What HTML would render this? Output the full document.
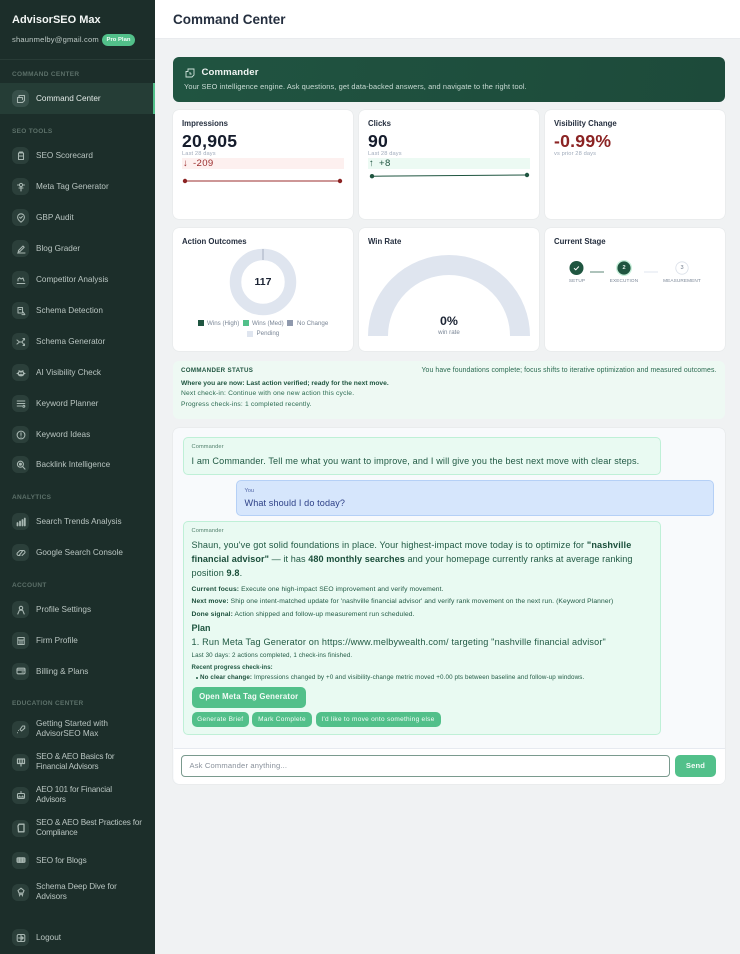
<!DOCTYPE html>
<html><head><meta charset="utf-8"><style>
*{box-sizing:border-box;margin:0;padding:0}
html,body{width:740px;height:954px;overflow:hidden;background:#f0f2f3;font-family:"Liberation Sans",Arial,sans-serif}
#r{position:relative;width:740px;height:954px;overflow:hidden;filter:blur(.3px)}
.a,.t,.l,.i,.n{position:absolute}
.t{white-space:nowrap}
#s{position:absolute;left:0;top:0;width:155px;height:954px;background:#1c2e2a}
.l{left:12px;font-size:6.5px;letter-spacing:.3px;color:#5c7069;font-weight:700;white-space:nowrap;line-height:8px}
.i{left:12px;width:17px;height:17px;border-radius:6px;background:#2b3f3a}
.i svg{position:absolute;left:3.5px;top:3.5px;width:10px;height:10px;fill:none;stroke:#a9b8b3;stroke-width:1.05;stroke-linecap:round;stroke-linejoin:round}
.n{left:36px;font-size:8.2px;line-height:10px;color:#b9c5c1;white-space:nowrap}
.c{position:absolute;background:#fff;border-radius:6px;box-shadow:0 0 1px rgba(30,50,60,.18)}
.h{position:absolute;font-size:7.8px;font-weight:700;color:#252f3f;white-space:nowrap;line-height:10px;margin-top:-.5px}
.big{position:absolute;font-size:17.6px;font-weight:700;line-height:20px;white-space:nowrap;letter-spacing:.25px;color:#151c2c}
.sm{position:absolute;font-size:5.7px;color:#a0abbb;white-space:nowrap;line-height:7px;letter-spacing:.12px}
.g{color:#1f5540}
.chat{color:#215a44;white-space:nowrap;position:absolute}
.chat b{color:#1b4f3b}
b{font-weight:700}
.btn{position:absolute;background:#52c08a;color:#f4fbf7;border-radius:5px;text-align:center;font-weight:700;white-space:nowrap}
.leg{position:absolute;font-size:6.2px;color:#7a8696;white-space:nowrap;line-height:8px}
.sq{position:absolute;width:6px;height:6px}
</style></head><body><div id="r">

<div class="a" style="left:155px;top:0;width:585px;height:39px;background:#fff;border-bottom:1px solid #e9ebee"></div>
<div class="t" style="left:173px;top:11px;font-size:13.5px;line-height:17px;font-weight:700;color:#252f3f">Command Center</div>

<div id="s">
<div class="t" style="left:12px;top:14px;font-size:11px;line-height:13px;font-weight:700;color:#f3f6f5">AdvisorSEO Max</div>
<div class="t" style="left:12px;top:34.5px;font-size:7.6px;line-height:10px;color:#bcc8c4;letter-spacing:.18px">shaunmelby@gmail.com</div>
<div class="a" style="left:102px;top:34px;width:33px;height:11.5px;border-radius:6px;background:#52c08a"></div>
<div class="t" style="left:102px;top:36.5px;width:33px;text-align:center;color:#f2fbf6;font-size:5.9px;font-weight:700;line-height:7px">Pro Plan</div>
<div class="a" style="left:0;top:59px;width:155px;height:1px;background:#283b36"></div>

<div class="l" style="top:71px">COMMAND CENTER</div>
<div class="a" style="left:0;top:83px;width:155px;height:31px;background:#253d36"></div>
<div class="a" style="left:153px;top:83px;width:2px;height:31px;background:#52c08a"></div>
<div class="i" style="top:90px;background:#38504a"><svg viewBox="0 0 10 10"><path d="M3 1.5h5.5v5L6.5 8.5H1.5v-5L3 3.5zM3 1.5v2h3.5M6.5 3.5v2"/></svg></div>
<div class="n" style="top:94px;color:#e3eae7">Command Center</div>

<div class="l" style="top:128px">SEO TOOLS</div>
<div class="i" style="top:147px"><svg viewBox="0 0 10 10"><path d="M2.5 2h5v6.5h-5zM3.5 2V1h3v1M3.5 5h3"/></svg></div><div class="n" style="top:151px">SEO Scorecard</div>
<div class="i" style="top:178px"><svg viewBox="0 0 10 10"><circle cx="5" cy="3" r="1.6"/><path d="M5 4.6V9M3 6h4M1.5 3h1.5M7 3h1.5"/></svg></div><div class="n" style="top:182px">Meta Tag Generator</div>
<div class="i" style="top:209px"><svg viewBox="0 0 10 10"><path d="M5 9.2C3 7.6 1.6 6 1.6 4.2a3.4 3.4 0 0 1 6.8 0C8.4 6 7 7.6 5 9.2z"/><path d="M3.6 4.2L4.7 5.3 6.4 3.4"/></svg></div><div class="n" style="top:213px">GBP Audit</div>
<div class="i" style="top:240px"><svg viewBox="0 0 10 10"><path d="M2.5 6.5L7 2l1.2 1.2L3.8 7.6 2.3 8zM1.5 9h7.5"/></svg></div><div class="n" style="top:244px">Blog Grader</div>
<div class="i" style="top:271px"><svg viewBox="0 0 10 10"><path d="M1.2 8.5h7.6M2 6V4l1.6-1.2L5 4l2-1 1 3"/></svg></div><div class="n" style="top:275px">Competitor Analysis</div>
<div class="i" style="top:302px"><svg viewBox="0 0 10 10"><path d="M2 1.5h4.5v5.5H2zM3.5 3.5h1.5M7 6l1.8 2.4M6 8.6h2.8"/></svg></div><div class="n" style="top:306px">Schema Detection</div>
<div class="i" style="top:333px"><svg viewBox="0 0 10 10"><path d="M1 3l2.5 2L1 7M3.5 5h2.5M6 5l2.5-3.5M6 5l2.5 3.5M7 1.5h1.5V3M7 8.5h1.5V7"/></svg></div><div class="n" style="top:337px">Schema Generator</div>
<div class="i" style="top:364px"><svg viewBox="0 0 10 10"><ellipse cx="5" cy="5.5" rx="3" ry="2.4" fill="#a9b8b3"/><path d="M1 5.5h1M8 5.5h1M3 2.6l1 1M7 2.6l-1 1"/><circle cx="3.9" cy="5.3" r=".5" stroke="#2b3f3a"/><circle cx="6.1" cy="5.3" r=".5" stroke="#2b3f3a"/></svg></div><div class="n" style="top:368px">AI Visibility Check</div>
<div class="i" style="top:395px"><svg viewBox="0 0 10 10"><path d="M1.2 2h7.6M1.2 4.5h7.6M1.2 7h4.5"/><circle cx="7.8" cy="7.3" r="1"/></svg></div><div class="n" style="top:399px">Keyword Planner</div>
<div class="i" style="top:426px"><svg viewBox="0 0 10 10"><circle cx="5" cy="5" r="3.9"/><path d="M5 2.8v2.6M5 7v.2"/></svg></div><div class="n" style="top:430px">Keyword Ideas</div>
<div class="i" style="top:456px"><svg viewBox="0 0 10 10"><circle cx="4.4" cy="4.2" r="3"/><circle cx="4.4" cy="4.2" r="1" fill="#a9b8b3"/><path d="M6.6 6.5l2.4 2.6"/></svg></div><div class="n" style="top:460px">Backlink Intelligence</div>

<div class="l" style="top:493.5px">ANALYTICS</div>
<div class="i" style="top:513px"><svg viewBox="0 0 10 10"><path d="M1.5 8.5V6M4 8.5V4.5M6.5 8.5V3M8.8 8.5V1.5" stroke-width="1.8"/></svg></div><div class="n" style="top:517px">Search Trends Analysis</div>
<div class="i" style="top:544px"><svg viewBox="0 0 10 10"><path d="M4 7.5H2.4A1.6 1.6 0 0 1 1.3 5L4 2.5h3.6A1.6 1.6 0 0 1 8.7 5L6 7.5"/><path d="M3.5 7l3-4"/></svg></div><div class="n" style="top:548px">Google Search Console</div>

<div class="l" style="top:581.5px">ACCOUNT</div>
<div class="i" style="top:601px"><svg viewBox="0 0 10 10"><circle cx="5" cy="3" r="1.7"/><path d="M1.8 9L3.4 5.2h3.2L8.2 9"/></svg></div><div class="n" style="top:605px">Profile Settings</div>
<div class="i" style="top:632px"><svg viewBox="0 0 10 10"><path d="M1.8 1.5h6.4v7H1.8zM1.8 4h6.4M4 4v4.5M6 4v4.5"/></svg></div><div class="n" style="top:636px">Firm Profile</div>
<div class="i" style="top:662.5px"><svg viewBox="0 0 10 10"><rect x="1" y="2.2" width="8" height="5.6" rx="1"/><path d="M1 4h8" stroke-width="1.3"/><path d="M6 6h1.5"/></svg></div><div class="n" style="top:666.5px">Billing &amp; Plans</div>

<div class="l" style="top:699.5px">EDUCATION CENTER</div>
<div class="i" style="top:720.5px"><svg viewBox="0 0 10 10"><path d="M4 5.5L6.5 2h2.2v2.2L5.5 7zM1.5 8.8v-.1M2.5 6.5v-.1"/></svg></div><div class="n" style="top:719px">Getting Started with<br>AdvisorSEO Max</div>
<div class="i" style="top:753.5px"><svg viewBox="0 0 10 10"><path d="M1.5 2h7v4.5h-7zM3.8 2v4.5M6.2 2v4.5M5 6.5V9" stroke-width="1.2"/></svg></div><div class="n" style="top:752px;letter-spacing:-.2px">SEO &amp; AEO Basics for<br>Financial Advisors</div>
<div class="i" style="top:786.5px"><svg viewBox="0 0 10 10"><rect x="1.5" y="3.5" width="7" height="5" rx="1"/><path d="M5 1.5v2M3.5 6h.1M6.5 6h.1M1.5 7h7"/></svg></div><div class="n" style="top:785px;letter-spacing:-.2px">AEO 101 for Financial<br>Advisors</div>
<div class="i" style="top:819.5px"><svg viewBox="0 0 10 10" style="stroke-width:1.3"><path d="M3 1.2h5v7.6H2.5L2 3z"/></svg></div><div class="n" style="top:818px;letter-spacing:-.17px">SEO &amp; AEO Best Practices for<br>Compliance</div>
<div class="i" style="top:851.5px"><svg viewBox="0 0 10 10"><rect x="1" y="2.8" width="8" height="4.6" rx="1" fill="#8a9a95"/><path d="M3.6 2.8v4.6M6.4 2.8v4.6"/></svg></div><div class="n" style="top:855.5px;letter-spacing:-.1px">SEO for Blogs</div>
<div class="i" style="top:883.5px"><svg viewBox="0 0 10 10"><path d="M5 1.2L8 3.5 7 6H3L2 3.5zM3.2 7.2h3.6M3.5 9l.5-1.8M6.5 9L6 7.2"/></svg></div><div class="n" style="top:882px;letter-spacing:-.08px">Schema Deep Dive for<br>Advisors</div>
<div class="i" style="top:929px"><svg viewBox="0 0 10 10"><rect x="1.2" y="1.5" width="7.6" height="7" rx="1.4"/><path d="M5 1.5v7M2.6 5h4.8M6 3.8L7.4 5 6 6.2"/></svg></div><div class="n" style="top:933px">Logout</div>
</div>

<!-- banner -->
<div class="a" style="left:173px;top:57px;width:552px;height:44.5px;border-radius:6px;background:linear-gradient(100deg,#205441,#1d4a3a)"></div>
<svg class="a" style="left:185px;top:68px;width:10px;height:10px;fill:none;stroke:#cfe2da;stroke-width:.9" viewBox="0 0 10 10"><path d="M3 1h6v6l-2 2H1V3.5h2zM3 1v2.5M5 4v2h1.6"/></svg>
<div class="t" style="left:201.5px;top:67px;font-size:9.6px;line-height:12px;font-weight:700;color:#f0f5f3;letter-spacing:.12px">Commander</div>
<div class="t" style="left:184px;top:82px;font-size:7.4px;line-height:9px;color:#c9dbd4;letter-spacing:.11px">Your SEO intelligence engine. Ask questions, get data-backed answers, and navigate to the right tool.</div>

<!-- metric cards -->
<div class="c" style="left:173px;top:110px;width:180px;height:109px"></div>
<div class="c" style="left:359px;top:110px;width:180px;height:109px"></div>
<div class="c" style="left:545px;top:110px;width:180px;height:109px"></div>
<div class="h" style="left:182px;top:119px">Impressions</div>
<div class="big" style="left:182px;top:131px">20,905</div>
<div class="sm" style="left:182px;top:150.5px">Last 28 days</div>
<div class="a" style="left:182px;top:158px;width:162px;height:11px;background:#fdf0ef"></div>
<div class="t" style="left:183px;top:158px;font-size:9.6px;line-height:11px;color:#9b2c2c;letter-spacing:.3px;word-spacing:2px">↓ -209</div>
<svg class="a" style="left:180px;top:177px;width:166px;height:8px" viewBox="0 0 166 8"><path d="M5 4H161" stroke="#9b2c2c" stroke-width="1"/><circle cx="5" cy="4" r="2.2" fill="#8b2323"/><circle cx="160" cy="4" r="2.2" fill="#8b2323"/></svg>

<div class="h" style="left:368px;top:119px">Clicks</div>
<div class="big" style="left:368px;top:131px">90</div>
<div class="sm" style="left:368px;top:150.5px">Last 28 days</div>
<div class="a" style="left:368px;top:158px;width:162px;height:11px;background:#ecfaf3"></div>
<div class="t" style="left:369px;top:158px;font-size:9.6px;line-height:11px;color:#1f5540;letter-spacing:.3px;word-spacing:2px">↑ +8</div>
<svg class="a" style="left:366px;top:170px;width:166px;height:10px" viewBox="0 0 166 10"><path d="M6 6.2L161 5" stroke="#1f5540" stroke-width="1"/><circle cx="6" cy="6.2" r="2.2" fill="#1f5540"/><circle cx="161" cy="5" r="2.2" fill="#1f5540"/></svg>

<div class="h" style="left:554px;top:119px">Visibility Change</div>
<div class="big" style="left:554px;top:131px;color:#8b2323">-0.99%</div>
<div class="sm" style="left:554px;top:150.5px">vs prior 28 days</div>

<!-- row 2 -->
<div class="c" style="left:173px;top:228px;width:180px;height:123px"></div>
<div class="c" style="left:359px;top:228px;width:180px;height:123px"></div>
<div class="c" style="left:545px;top:228px;width:180px;height:123px"></div>
<div class="h" style="left:182px;top:237px">Action Outcomes</div>
<svg class="a" style="left:226px;top:245px;width:74px;height:74px" viewBox="0 0 74 74"><circle cx="37" cy="37" r="27.5" fill="none" stroke="#dfe5ef" stroke-width="11.5"/><path d="M37 4v11" stroke="#8f99ad" stroke-width=".7"/></svg>
<div class="t" style="left:233px;top:276px;width:60px;text-align:center;font-size:10.5px;line-height:13px;font-weight:700;color:#1b2333">117</div>
<div class="sq" style="left:198px;top:320px;background:#1f5540"></div><div class="leg" style="left:207px;top:319.5px">Wins (High)</div>
<div class="sq" style="left:242.5px;top:320px;background:#52c08a"></div><div class="leg" style="left:252px;top:319.5px">Wins (Med)</div>
<div class="sq" style="left:287px;top:320px;background:#8f99ad"></div><div class="leg" style="left:297px;top:319.5px">No Change</div>
<div class="sq" style="left:247px;top:331px;background:#dfe5ef"></div><div class="leg" style="left:256.5px;top:330px">Pending</div>

<div class="h" style="left:368px;top:237px">Win Rate</div>
<svg class="a" style="left:359px;top:245px;width:180px;height:95px" viewBox="0 0 180 95"><path d="M19 91A71 71 0 0 1 161 91" fill="none" stroke="#dfe5ef" stroke-width="20"/></svg>
<div class="t" style="left:409px;top:314px;width:80px;text-align:center;font-size:12.4px;line-height:15px;font-weight:700;color:#1b2333">0%</div>
<div class="t" style="left:409px;top:328.5px;width:80px;text-align:center;font-size:6.2px;line-height:8px;color:#7a8696">win rate</div>

<div class="h" style="left:554px;top:237px">Current Stage</div>
<svg class="a" style="left:560px;top:255px;width:140px;height:26px" viewBox="0 0 140 26" fill="none"><path d="M30 17H44" stroke="#5d8777" stroke-width="1"/><path d="M84 17H98" stroke="#dfe5ef" stroke-width="1"/><circle cx="16.5" cy="13" r="7" fill="#1f5540"/><path d="M14 13.2l1.8 1.6 3-3.3" stroke="#fff" stroke-width="1"/><circle cx="64" cy="13" r="8" fill="#c8f0db"/><circle cx="64" cy="13" r="6.6" fill="#1f5540"/><circle cx="122" cy="13" r="6.2" fill="#fff" stroke="#d9dfe8" stroke-width=".8"/></svg>
<div class="t" style="left:614px;top:264px;width:20px;text-align:center;font-size:5.6px;line-height:8px;font-weight:700;color:#e6f3ed">2</div>
<div class="t" style="left:672px;top:264px;width:20px;text-align:center;font-size:5.6px;line-height:8px;color:#6e7a8a">3</div>
<div class="t" style="left:557px;top:276.5px;width:40px;text-align:center;font-size:4.7px;line-height:7px;color:#7a8696;letter-spacing:.12px">SETUP</div>
<div class="t" style="left:604px;top:276.5px;width:40px;text-align:center;font-size:4.7px;line-height:7px;color:#7a8696;letter-spacing:.12px">EXECUTION</div>
<div class="t" style="left:661px;top:276.5px;width:42px;text-align:center;font-size:4.7px;line-height:7px;color:#7a8696;letter-spacing:.12px">MEASUREMENT</div>

<!-- status -->
<div class="a" style="left:173px;top:360.5px;width:552px;height:58px;border-radius:6px;background:#eef9f3"></div>
<div class="t" style="left:181px;top:366.5px;font-size:6.2px;line-height:8px;font-weight:700;color:#1f5540;letter-spacing:.32px">COMMANDER STATUS</div>
<div class="t g" style="left:421.5px;top:367px;font-size:6.9px;line-height:8px;letter-spacing:.095px;color:#2a6a50">You have foundations complete; focus shifts to iterative optimization and measured outcomes.</div>
<div class="t" style="left:181px;top:379.5px;font-size:6.7px;line-height:8px;font-weight:700;color:#1f5540">Where you are now: Last action verified; ready for the next move.</div>
<div class="t" style="left:181px;top:390px;font-size:6.7px;line-height:8px;color:#2a6a50;letter-spacing:.19px">Next check-in: Continue with one new action this cycle.</div>
<div class="t" style="left:181px;top:400.5px;font-size:6.7px;line-height:8px;color:#2a6a50;letter-spacing:.17px">Progress check-ins: 1 completed recently.</div>

<!-- chat -->
<div class="c" style="left:173px;top:428px;width:552px;height:356px;background:#f8fafc"></div>
<div class="a" style="left:173.5px;top:748px;width:551px;height:35.5px;background:#fff;border-top:1px solid #e6eaf0;border-radius:0 0 6px 6px"></div>

<div class="a" style="left:183px;top:436.5px;width:478px;height:38.5px;background:#e9faf2;border:1px solid #bff0d7;border-radius:5px"></div>
<div class="chat" style="left:191.5px;top:444px;font-size:5.7px;line-height:7px;color:#52806d;letter-spacing:.1px">Commander</div>
<div class="chat" style="left:191.5px;top:455px;font-size:9.1px;line-height:12px;letter-spacing:.14px">I am Commander. Tell me what you want to improve, and I will give you the best next move with clear steps.</div>

<div class="a" style="left:236px;top:480px;width:478px;height:35.5px;background:#d6e6fc;border:1px solid #b5d0f6;border-radius:5px"></div>
<div class="chat" style="left:244.5px;top:487.5px;font-size:5.7px;line-height:7px;color:#5468a8">You</div>
<div class="chat" style="left:244.5px;top:497px;font-size:9.1px;line-height:12px;letter-spacing:.11px;color:#2c3f86">What should I do today?</div>

<div class="a" style="left:183px;top:521px;width:478px;height:213.5px;background:#e9faf2;border:1px solid #bff0d7;border-radius:5px"></div>
<div class="chat" style="left:191.5px;top:528px;font-size:5.7px;line-height:7px;color:#52806d;letter-spacing:.1px">Commander</div>
<div class="chat" style="left:191.5px;top:539px;font-size:9.1px;line-height:12px;letter-spacing:.13px">Shaun, you've got solid foundations in place. Your highest-impact move today is to optimize for <b>"nashville</b></div>
<div class="chat" style="left:191.5px;top:553px;font-size:9.1px;line-height:12px;letter-spacing:.08px"><b>financial advisor"</b> — it has <b>480 monthly searches</b> and your homepage currently ranks at average ranking</div>
<div class="chat" style="left:191.5px;top:567px;font-size:9.1px;line-height:12px;letter-spacing:.13px">position <b>9.8</b>.</div>
<div class="chat" style="left:191.5px;top:585.5px;font-size:6.7px;line-height:8px;letter-spacing:.11px"><b>Current focus:</b> Execute one high-impact SEO improvement and verify movement.</div>
<div class="chat" style="left:191.5px;top:598px;font-size:6.7px;line-height:8px;letter-spacing:.11px"><b>Next move:</b> Ship one intent-matched update for 'nashville financial advisor' and verify rank movement on the next run. (Keyword Planner)</div>
<div class="chat" style="left:191.5px;top:610.5px;font-size:6.7px;line-height:8px;letter-spacing:.11px"><b>Done signal:</b> Action shipped and follow-up measurement run scheduled.</div>
<div class="chat" style="left:191.5px;top:622px;font-size:9px;line-height:12px;font-weight:700;color:#1f5540">Plan</div>
<div class="chat" style="left:191.5px;top:636px;font-size:9.1px;line-height:12px;letter-spacing:.18px">1. Run Meta Tag Generator on https://www.melbywealth.com/ targeting "nashville financial advisor"</div>
<div class="chat" style="left:191.5px;top:651.5px;font-size:6.25px;line-height:8px;letter-spacing:.11px">Last 30 days: 2 actions completed, 1 check-ins finished.</div>
<div class="chat" style="left:191.5px;top:663.5px;font-size:6.1px;line-height:8px;font-weight:700;letter-spacing:.05px">Recent progress check-ins:</div>
<div class="a" style="left:196px;top:677px;width:2px;height:2px;border-radius:50%;background:#215a44"></div>
<div class="chat" style="left:200px;top:673.5px;font-size:6.25px;line-height:8px;letter-spacing:.11px"><b>No clear change:</b> Impressions changed by +0 and visibility-change metric moved +0.00 pts between baseline and follow-up windows.</div>
<div class="btn" style="left:191.5px;top:687px;width:114.5px;height:20.5px;font-size:7.8px;line-height:20.5px;letter-spacing:.2px">Open Meta Tag Generator</div>
<div class="btn" style="left:191.5px;top:711.5px;width:57.5px;height:15px;font-size:6.5px;line-height:15px;font-weight:400;letter-spacing:.28px">Generate Brief</div>
<div class="btn" style="left:252px;top:711.5px;width:60px;height:15px;font-size:6.5px;line-height:15px;font-weight:400;letter-spacing:.28px">Mark Complete</div>
<div class="btn" style="left:315.5px;top:711.5px;width:125px;height:15px;font-size:6.5px;line-height:15px;font-weight:400;letter-spacing:.28px">I'd like to move onto something else</div>

<div class="a" style="left:181px;top:755px;width:489px;height:22px;background:#fff;border:1px solid #7a9a8e;border-radius:4px"></div>
<div class="t" style="left:189.5px;top:761px;font-size:7.6px;line-height:10px;color:#8a929c;letter-spacing:.16px">Ask Commander anything...</div>
<div class="btn" style="left:675px;top:755px;width:41px;height:22px;font-size:7.6px;line-height:22px;letter-spacing:.15px">Send</div>

</div></body></html>
